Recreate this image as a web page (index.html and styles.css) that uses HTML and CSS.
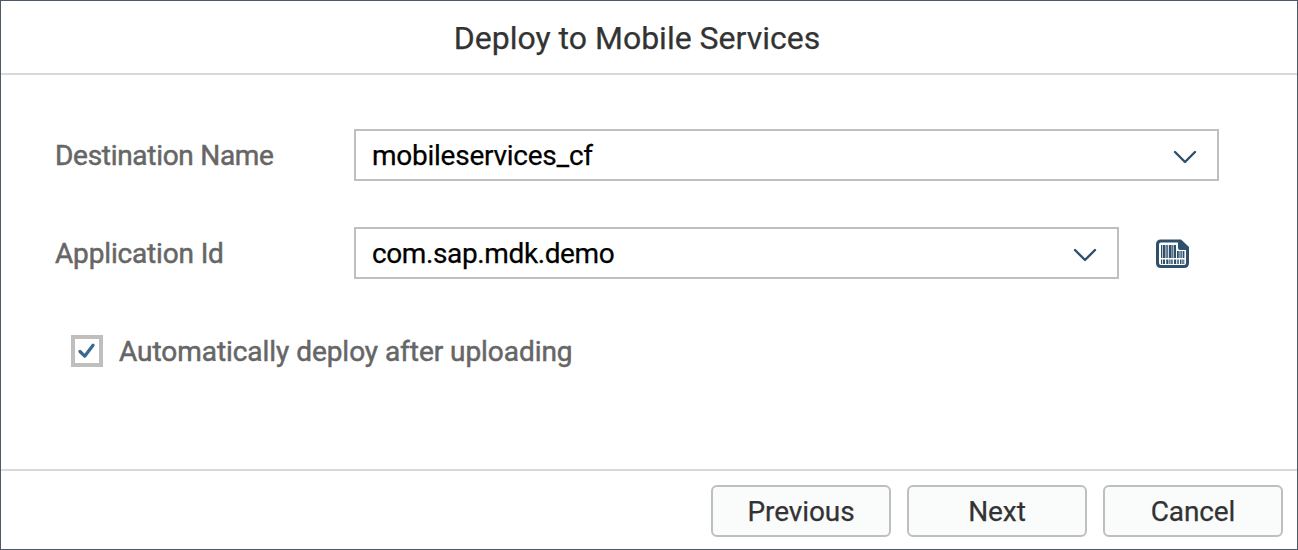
FILE: index.html
```html
<!DOCTYPE html>
<html lang="en">
<head>
<meta charset="utf-8">
<title>Deploy to Mobile Services</title>
<link rel="stylesheet" href="styles.css">
</head>
<body>
<main class="dialog">
  <header class="dialog-header"><h1 class="title">Deploy to Mobile Services</h1></header>
  <section class="content">
    <div class="row">
      <span class="label label-destination">Destination Name</span>
      <div class="select select-wide">
        <span class="value value-destination">mobileservices_cf</span>
        <svg class="chevron" viewBox="0 0 24 14"><path d="M2 2 12 12 22 2"/></svg>
      </div>
    </div>
    <div class="row">
      <span class="label">Application Id</span>
      <div class="select">
        <span class="value value-app">com.sap.mdk.demo</span>
        <svg class="chevron" viewBox="0 0 24 14"><path d="M2 2 12 12 22 2"/></svg>
      </div>
      <svg class="barcode" viewBox="0 0 34 30">
        <path class="ink" d="M5 .5H25L33 8V24Q33 29 28 29H5Q0 29 0 24V5.5Q0 .5 5 .5Z"/>
        <path class="paper" d="M5 3.5H22V9Q22 11 24 11H30V24Q30 26 28 26H5Q3 26 3 24V5.5Q3 3.5 5 3.5Z"/>
        <path class="ink" d="M5 6h1.3v13H5zM7 6h2v13H7zM9.5 6h1.2v13H9.5zM11.2 6h1v13h-1zM13 6h2.6v13H13zM16.2 6h1.2v13h-1.2zM18 6h2v13h-2zM21 12h1.8v7H21zM23.4 12h1.2v7h-1.2zM25.2 12h1.2v7h-1.2zM27 12h1.4v7H27z"/>
        <path class="ink" d="M5 20.5h1.2V25H5zM7 20.5h2V25H7zM10.2 20.5h2.2V25h-2.2zM13.3 20.5h1.2V25h-1.2zM15.2 20.5h1.5V25h-1.5zM18 20.5h2.2V25H18zM21.3 20.5h1.5V25h-1.5zM24 20.5h1.2V25H24zM25.7 20.5h1V25h-1zM27.3 20.5h1V25h-1z"/>
      </svg>
    </div>
    <label class="check-row">
      <span class="checkbox"><svg class="tick" viewBox="0 0 18 16"><path d="M2 8.5 6.7 13.2 15 2.2"/></svg></span>
      <span class="check-text">Automatically deploy after uploading</span>
    </label>
  </section>
  <footer class="dialog-footer">
    <button class="btn">Previous</button>
    <button class="btn">Next</button>
    <button class="btn">Cancel</button>
  </footer>
</main>
</body>
</html>
```
FILE: styles.css
```css
* { box-sizing: border-box; }
body { margin: 0; font-family: Roboto, "Liberation Sans", sans-serif; font-size: 28px; line-height: 32px; -webkit-text-stroke: 0.25px currentColor; }
.dialog { width: 1298px; height: 550px; border: 1px solid #4b5a66; background: #fff; display: flex; flex-direction: column; white-space: nowrap; }
.dialog-header { height: 74px; border-bottom: 2px solid #d9d9d9; padding-right: 24px; display: flex; align-items: center; justify-content: center; }
.title { margin: 0; padding-top: 2px; font-size: 32px; font-weight: 400; line-height: 36px; color: #333; }
.content { flex: 1; padding: 54px 0 0 54px; }
.row { display: flex; align-items: center; height: 52px; margin-bottom: 46px; }
.label { width: 299px; padding-top: 2px; color: #666; letter-spacing: -0.16px; -webkit-text-stroke-width: 0.5px; }
.label-destination { letter-spacing: -0.29px; }
.select { width: 765px; height: 52px; border: 2px solid #bfbfbf; padding: 0 20px 0 16px; color: #000; display: flex; align-items: center; justify-content: space-between; }
.select-wide { width: 865px; }
.value { padding-top: 2px; }
.value-destination { letter-spacing: -0.25px; }
.value-app { letter-spacing: -0.38px; }
.chevron { width: 24px; height: 14px; margin-top: 4px; fill: none; stroke: #2e506c; stroke-width: 2.4; stroke-linecap: round; stroke-linejoin: round; }
.barcode { width: 34px; height: 30px; margin: 1px 0 0 37px; }
.ink { fill: #2e506c; }
.paper { fill: #fff; }
.check-row { display: flex; align-items: center; gap: 16px; height: 52px; padding-left: 16px; color: #666; }
.check-text { padding-top: 2px; letter-spacing: -0.05px; -webkit-text-stroke-width: 0.5px; }
.checkbox { width: 32px; height: 32px; border: 4px solid #bfbfbf; display: flex; align-items: center; justify-content: center; }
.tick { width: 18px; height: 16px; fill: none; stroke: #396990; stroke-width: 3.2; stroke-linecap: round; stroke-linejoin: round; }
.dialog-footer { height: 80px; border-top: 2px solid #d9d9d9; padding: 14px 14px 0 0; display: flex; justify-content: flex-end; gap: 16px; }
.btn { width: 180px; height: 52px; padding: 2px 0 0; border: 2px solid #bfbfbf; border-radius: 6px; background: #fafbfb; color: #333; font: inherit; letter-spacing: -0.1px; }
```
